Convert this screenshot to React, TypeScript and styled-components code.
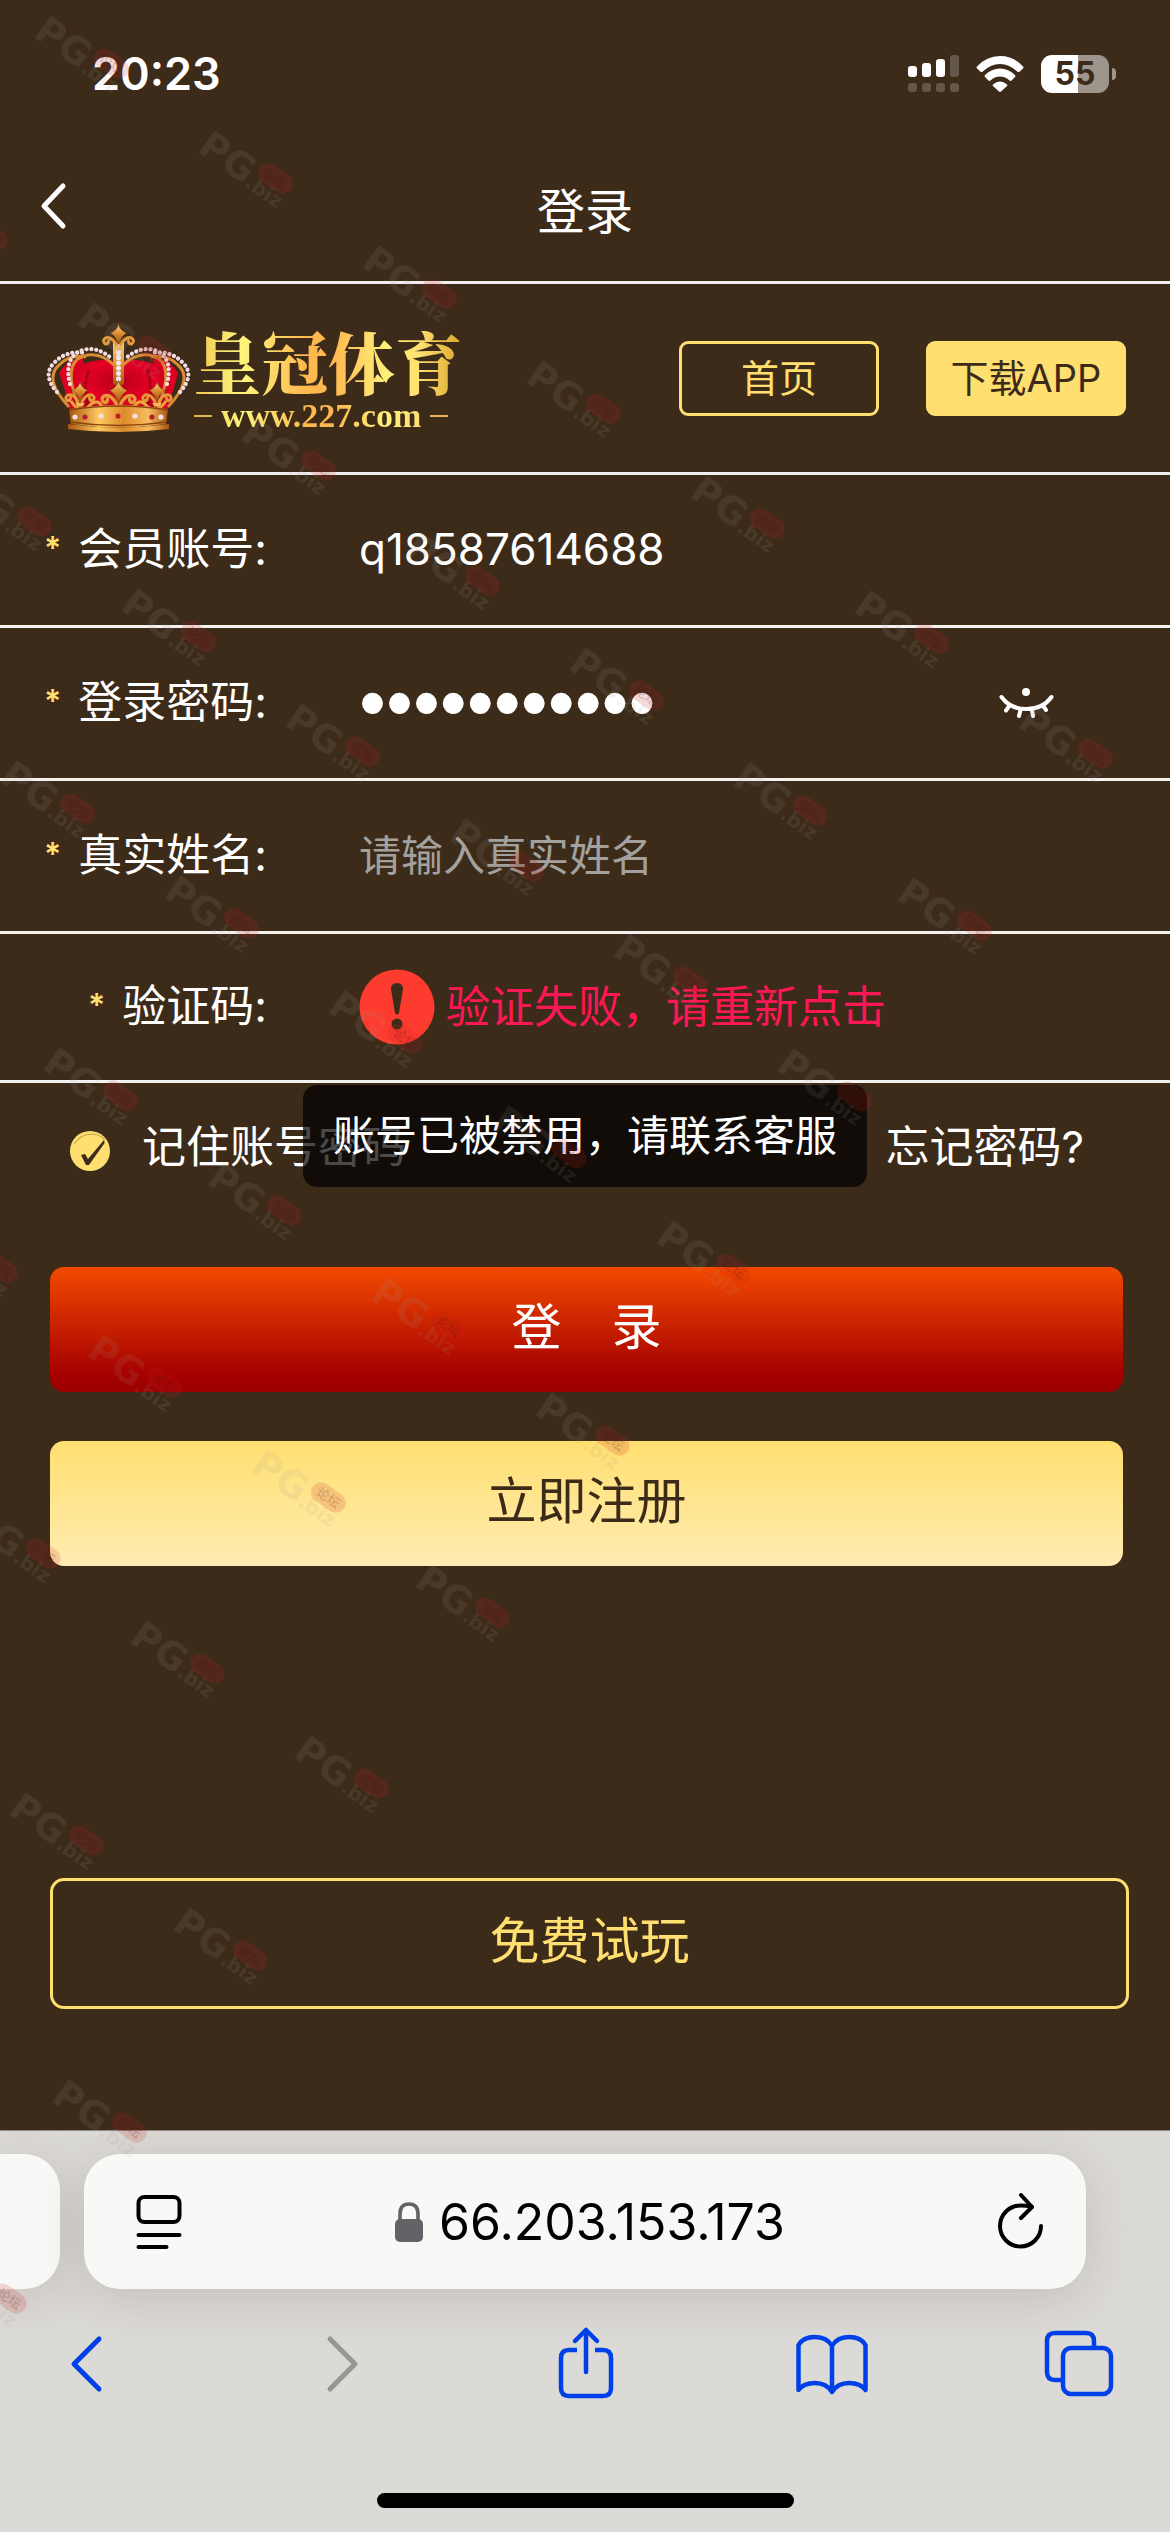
import React, { useState } from 'react';
import styled, { createGlobalStyle, css } from 'styled-components';

const gold = '#ffdf70';
const brown = '#3d2b1a';
const blue = '#0040e8';

const GlobalStyle = createGlobalStyle`
  *, *::before, *::after { box-sizing: border-box; }
  body {
    margin: 0;
    background: ${brown};
    color: #fff;
    font-family: Inter, "Noto Sans CJK SC", sans-serif;
    font-size: 44px;
    line-height: 60px;
  }
  button, input { font: inherit; color: inherit; margin: 0; }
  button { padding: 0; border: 0; background: none; cursor: pointer; }
`;

const Screen = styled.div`
  position: relative;
  display: flex;
  flex-direction: column;
  overflow: hidden;
`;

const StatusBar = styled.div`
  display: flex;
  align-items: center;
  justify-content: space-between;
  height: 142px;
  padding: 6px 54px 0 92px;
`;

const Clock = styled.time`
  font-size: 45px;
  font-weight: 600;
`;

const StatusIcons = styled.div`
  display: flex;
  align-items: center;
  gap: 17px;
`;

const Battery = styled.div`
  display: flex;
  align-items: center;
  gap: 3px;
`;

const BatteryBody = styled.div`
  width: 68px;
  height: 38px;
  border-radius: 11px;
  background: linear-gradient(90deg, #fff 55%, #9e958c 55%);
  color: ${brown};
  font-size: 32px;
  font-weight: 700;
  line-height: 38px;
  text-align: center;
`;

const BatteryTip = styled.div`
  width: 4px;
  height: 12px;
  border-radius: 0 4px 4px 0;
  background: #9e958c;
`;

const TitleBar = styled.header`
  display: grid;
  grid-template-columns: 68px 1fr 68px;
  align-items: center;
  height: 142px;
  border-bottom: 3px solid #f0eeee;
`;

const BackButton = styled.button`
  display: flex;
  justify-content: flex-end;
  padding-bottom: 12px;
`;

const Title = styled.h1`
  margin: 0;
  font-size: 48px;
  font-weight: 400;
  text-align: center;
`;

const BrandBar = styled.section`
  display: flex;
  align-items: center;
  gap: 47px;
  height: 191px;
  padding: 0 44px 0 45px;
  border-bottom: 3px solid #f0eeee;
`;

const Brand = styled.div`
  display: flex;
  align-items: center;
  gap: 2px;
  margin-right: auto;
`;

const goldText = css`
  background: linear-gradient(90deg, #f0c850, #fdf57e 18%, #ffb84e 42%, #ffb84e 52%, #fff07c 72%, #ffe070 84%, #d9a62c);
  background-clip: text;
  -webkit-background-clip: text;
  color: transparent;
`;

const BrandWords = styled.div`
  display: flex;
  flex-direction: column;
`;

const BrandName = styled.strong`
  ${goldText}
  font-family: "Noto Serif CJK SC", "Noto Sans CJK SC", serif;
  font-size: 67px;
  font-weight: 900;
  line-height: 76px;
`;

const BrandSite = styled.span`
  ${goldText}
  display: flex;
  align-items: center;
  gap: 9px;
  font-family: "Liberation Serif", serif;
  font-size: 34px;
  font-weight: 700;
  line-height: 36px;
  &::before, &::after {
    content: '';
    width: 18px;
    height: 2px;
    background: #e6b450;
  }
`;

const SmallButton = styled.button<{ $filled?: boolean }>`
  width: 200px;
  height: 75px;
  border: 3px solid ${gold};
  border-radius: 9px;
  background: ${(p) => (p.$filled ? gold : 'transparent')};
  color: ${(p) => (p.$filled ? brown : gold)};
  font-size: 38px;
  white-space: nowrap;
`;

const Row = styled.div<{ $short?: boolean }>`
  display: flex;
  align-items: center;
  height: ${(p) => (p.$short ? 149 : 153)}px;
  padding-right: 116px;
  border-bottom: 3px solid #f2f2f0;
`;

const Label = styled.label`
  display: flex;
  justify-content: flex-end;
  align-items: center;
  gap: 17px;
  width: 267px;
  margin-right: 92px;
  padding-bottom: 2px;
  white-space: nowrap;
`;

const Star = styled.span`
  color: ${gold};
  font-size: 32px;
  font-weight: 600;
  line-height: 32px;
`;

const TextBox = styled.input<{ $dots?: boolean }>`
  flex: 1;
  min-width: 0;
  height: 90px;
  padding: 0 0 2px;
  border: 0;
  outline: 0;
  background: transparent;
  ${(p) => p.$dots && css`
    font-family: "Liberation Sans", sans-serif;
    font-size: 77px;
  `}
  &::placeholder { color: #a3a19e; font-size: 42px; opacity: 1; }
`;

const CaptchaButton = styled.button`
  display: flex;
  align-items: center;
  gap: 11px;
  color: #ff1654;
  white-space: nowrap;
`;

const Options = styled.div`
  position: relative;
  display: flex;
  align-items: center;
  justify-content: space-between;
  height: 128px;
  padding: 0 86px 0 70px;
`;

const Remember = styled.label`
  display: flex;
  align-items: center;
  gap: 32px;
`;

const Tick = styled.span`
  position: relative;
  display: flex;
  margin-top: 8px;
  svg { pointer-events: none; }
`;

const TickBox = styled.input`
  position: absolute;
  inset: 0;
  width: 40px;
  height: 40px;
  opacity: 0;
`;

const Forgot = styled.a`
  color: inherit;
  text-decoration: none;
`;

const Toast = styled.div`
  position: absolute;
  top: 2px;
  left: 50%;
  transform: translateX(-50%);
  padding: 21px 30px;
  border-radius: 14px;
  background: rgba(0, 0, 0, 0.71);
  font-size: 42px;
  white-space: nowrap;
`;

const Actions = styled.div`
  display: flex;
  flex-direction: column;
  gap: 49px;
  padding: 56px 47px 312px 50px;
`;

const BigButton = styled.button<{ $tone: 'red' | 'gold' }>`
  height: 125px;
  padding-bottom: 6px;
  border-radius: 14px;
  font-size: 50px;
  white-space: pre;
  ${(p) => p.$tone === 'red'
    ? css`
        background: linear-gradient(#f24a00, #a60000 86%, #9a0000);
        color: #fff;
      `
    : css`
        background: linear-gradient(#ffdf70, #ffecb2);
        color: ${brown};
      `}
`;

const TrialButton = styled.button`
  height: 131px;
  margin: 0 41px 121px 50px;
  padding-bottom: 6px;
  border: 3px solid ${gold};
  border-radius: 14px;
  color: ${gold};
  font-size: 50px;
`;

const Browser = styled.footer`
  display: flex;
  flex-direction: column;
  border-top: 1px solid #8e8a86;
  background: #dcdad6;
  color: #000;
`;

const Tabs = styled.div`
  display: flex;
  gap: 24px;
  padding: 23px 84px 0 0;
`;

const tabShape = css`
  height: 135px;
  background: #f8f8f6;
  box-shadow: 0 8px 50px rgba(60, 50, 40, 0.16);
`;

const NextTab = styled.div`
  ${tabShape}
  width: 60px;
  border-radius: 0 36px 36px 0;
`;

const AddressBar = styled.div`
  ${tabShape}
  flex: 1;
  display: flex;
  align-items: center;
  justify-content: space-between;
  padding: 0 42px 0 52px;
  border-radius: 36px;
`;

const Address = styled.span`
  display: flex;
  align-items: center;
  gap: 16px;
  font-size: 50px;
`;

const IconButton = styled.button`
  display: flex;
`;

const Toolbar = styled.nav`
  display: flex;
  justify-content: space-between;
  padding: 37px 54px 0 50px;
`;

const HomeBar = styled.div`
  width: 417px;
  height: 15px;
  margin: 93px auto 24px;
  border-radius: 8px;
  background: #000;
`;

const MarkLayer = styled.svg`
  position: absolute;
  inset: 0;
  width: 100%;
  height: 100%;
  pointer-events: none;
`;

const marks: { x: number; y: number }[] = [];
for (let j = 0; j < 10; j++) {
  for (let i = -3; i + j <= 6; i++) {
    const x = Math.round(34 + i * 164 + j * 43.3);
    const y = Math.round(15 + i * 115 + j * 286.7);
    if (x > -100 && y > 0) marks.push({ x, y });
  }
}

const Marks = () => (
  <MarkLayer aria-hidden="true">
    {marks.map(({ x, y }) => (
      <g key={`${x}-${y}`} transform={`translate(${x + 15} ${y}) rotate(35)`} fill="rgba(160,155,145,0.13)" fontWeight="700">
        <text x="-2" y="27" fontFamily="DejaVu Sans" fontSize="38">PG</text>
        <text x="57" y="28" fontFamily="DejaVu Sans" fontSize="20">.biz</text>
        <rect x="60" y="-6" width="38" height="20" rx="10" fill="rgba(200,30,30,0.17)" />
        <text x="66" y="9" fontFamily="Noto Sans CJK SC" fontSize="13" fill="rgba(50,20,10,0.18)">论坛</text>
      </g>
    ))}
  </MarkLayer>
);

const SignalIcon = () => (
  <svg width="51" height="38" viewBox="0 0 51 38" fill="#fff">
    <rect x="0" y="11" width="9" height="11" rx="3" />
    <rect x="14" y="8" width="9" height="14" rx="3" />
    <rect x="28" y="4" width="9" height="18" rx="3" />
    <g opacity="0.2">
      <rect x="42" y="0" width="9" height="22" rx="3" />
      {[0, 14, 28, 42].map((x) => <rect key={x} x={x} y="28" width="9" height="9" rx="3" />)}
    </g>
  </svg>
);

const WifiIcon = () => (
  <svg width="48" height="36" viewBox="0 0 48 36" fill="#fff">
    <path d="M1 10.500Q10.500 0 24 0t23 10.500q1 1 0 2l-3.500 3.300q-1 .8-2 0Q33.500 8 24 8T6.500 15.800q-1 .8-2 0L1 12.500q-1-1 0-2z" />
    <path d="M9 19q6.500-6.500 15-6.500T39 19q1 1 0 2l-3.500 3.500q-1 .8-2 0Q29.500 20.500 24 20.500t-9.500 4q-1 .8-2 0L9 21q-1-1 0-2z" />
    <path d="M17 28.500q7-6 14 0 .8.800 0 1.600L25 35.500q-1 .8-2 0l-6-5.400q-.8-.8 0-1.600z" />
  </svg>
);

const Fleur = ({ x, y, s = 1 }: { x: number; y: number; s?: number }) => (
  <g transform={`translate(${x} ${y}) scale(${s})`}>
    <path d="M0-15Q1-9 8-6 2-2 1 5h-2Q-2-2-8-6-1-9 0-15z" fill="url(#goldV)" stroke="#7a3a08" strokeWidth=".6" />
    <path d="M-2 6Q-7-3-13-1q-4 3 0 6 3 0 3-3M2 6Q7-3 13-1q4 3 0 6-3 0-3-3" fill="none" stroke="#e59a38" strokeWidth="3" strokeLinecap="round" />
    <path d="M-5 7h10l-2 4h-6z" fill="#f4b95a" />
  </g>
);

const CrownLogo = () => (
  <svg width="147" height="110" viewBox="0 2 147 110" role="img" aria-label="皇冠体育">
    <defs>
      <linearGradient id="goldV" x1="0" y1="0" x2="0" y2="1">
        <stop offset="0" stopColor="#ffd98a" /><stop offset=".5" stopColor="#d98a2e" /><stop offset="1" stopColor="#9c4f10" />
      </linearGradient>
      <linearGradient id="goldH" x1="0" y1="0" x2="1" y2="0">
        <stop offset="0" stopColor="#a8560f" /><stop offset=".3" stopColor="#ffc860" /><stop offset=".55" stopColor="#dc8a2c" /><stop offset=".8" stopColor="#f8bc60" /><stop offset="1" stopColor="#a8560f" />
      </linearGradient>
      <radialGradient id="velvet" cx=".5" cy=".4" r=".7">
        <stop offset="0" stopColor="#b80016" /><stop offset=".55" stopColor="#e60026" /><stop offset="1" stopColor="#a00014" />
      </radialGradient>
    </defs>
    <path d="M14 52q8-14 24-15l8 53-20 2Q20 68 14 52zM133 52q-8-14-24-15l-8 53 20 2q8-24 12-40z" fill="#dc0022" />
    <path d="M32 92Q18 54 38 43q17-7 35-2 18-5 36 2 20 11 6 49z" fill="url(#velvet)" />
    <path d="M44 48q-7 20 0 36M102 48q7 20 0 36" stroke="#6c000c" strokeWidth="3" fill="none" opacity=".45" />
    <path d="M24 86Q-2 58 14 44 25 33 41 36M123 86q26-28 10-42-11-11-27-8M34 86Q16 42 39 35q16-5 31 10M113 86q18-44-5-51-16-5-31 10" fill="none" stroke="#d98c34" strokeWidth="3" />
    <path d="M12 71Q-3 54 9 42 21 29 40 32M135 71q15-17 3-29-12-13-31-10M25 63Q18 36 38 29q14-4 28 8M122 63q7-27-13-34-14-4-28 8" fill="none" stroke="#f4dde2" strokeWidth="4.200" strokeLinecap="round" strokeDasharray=".1 4.800" />
    <path d="M68 22h11v40l-5.500 6-5.500-6z" fill="url(#goldV)" />
    <path d="M73.500 26v34" stroke="#f8e6ee" strokeWidth="5" strokeLinecap="round" strokeDasharray=".1 5.200" />
    <Fleur x={73.5} y={18} />
    <Fleur x={73.5} y={76} s={1.1} />
    <Fleur x={35} y={75} s={0.95} />
    <Fleur x={112} y={75} s={0.95} />
    <path d="M26 80q10 16 20 3 8-6 12 5 8-2 15-3 8 1 15 3 5-11 12-5 10 13 21-3" fill="none" stroke="#f0a53e" strokeWidth="3" />
    <path d="M24 88q49-8 99 0l-2 15q-48 7-95 0z" fill="url(#goldH)" />
    <path d="M24 89q49-8 99 0M25 101q48 7 97 0" fill="none" stroke="#8c430c" strokeWidth="1.400" />
    <path d="M23 103q50 7 101 0v5q-51 6-101 0z" fill="url(#goldH)" />
    {[[30, 96, '#f4dfe4'], [40, 96, '#b3202c'], [56, 95, '#f4dfe4'], [73, 95, '#c01c2a'], [90, 95, '#f4dfe4'], [107, 96, '#b3202c'], [116, 96, '#f4dfe4']].map(([x, y, c]) => (
      <circle key={x} cx={x} cy={y} r="2.600" fill={c as string} />
    ))}
  </svg>
);

const EyeIcon = () => (
  <svg width="55" height="30" viewBox="0 0 55 30" fill="none" stroke="#fff" strokeWidth="4" strokeLinecap="round">
    <path d="M2.500 9Q11 21 27.500 21T52.500 9" />
    <path d="M10.500 17.500l-3.500 5M21.500 22l-1.500 6M33 22l1 6M43.500 17l3.500 5" />
    <circle cx="27" cy="4" r="4" fill="#fff" stroke="none" />
  </svg>
);

const ErrorIcon = () => (
  <svg width="76" height="76" viewBox="0 0 76 76">
    <circle cx="38" cy="38" r="37.500" fill="#fd3b2f" />
    <path d="M32 20q0-6 6-6t6 6l-4 24q-2 3-4 0z" fill={brown} />
    <circle cx="38" cy="55" r="5.500" fill={brown} />
  </svg>
);

const TickIcon = ({ on }: { on: boolean }) => (
  <svg width="40" height="40" viewBox="0 0 40 40">
    <circle cx="20" cy="20" r="20" fill={gold} />
    <path d="M4 13Q12 1 26 3.500q6 1.500 9 6" fill="none" stroke="#c8ab55" strokeWidth="1.200" />
    {on && <path d="M11 24l4-1 3 5L34 9l.6 3L19 34h-3z" fill={brown} />}
  </svg>
);

const Chevron = ({ d, color }: { d: string; color: string }) => (
  <svg width="72" height="74" viewBox="0 0 72 74" fill="none" stroke={color} strokeWidth="5" strokeLinecap="round" strokeLinejoin="round">
    <path d={d} />
  </svg>
);

type FieldProps = { id: string; label: string; short?: boolean; children: React.ReactNode };

const Field = ({ id, label, short, children }: FieldProps) => (
  <Row $short={short}>
    <Label htmlFor={id}><Star>*</Star>{label}</Label>
    {children}
  </Row>
);

export default function App() {
  const [account, setAccount] = useState('q18587614688');
  const [password, setPassword] = useState('abcdefghijk');
  const [name, setName] = useState('');
  const [remember, setRemember] = useState(true);
  const [visible, setVisible] = useState(false);

  return (
    <>
      <GlobalStyle />
      <Screen>
        <StatusBar>
          <Clock>20:23</Clock>
          <StatusIcons>
            <SignalIcon />
            <WifiIcon />
            <Battery>
              <BatteryBody>55</BatteryBody>
              <BatteryTip />
            </Battery>
          </StatusIcons>
        </StatusBar>

        <TitleBar>
          <BackButton aria-label="返回">
            <svg width="28" height="48" viewBox="0 0 28 48" fill="none" stroke="#fff" strokeWidth="5" strokeLinecap="round" strokeLinejoin="round">
              <path d="M23 4L4 24l19 20" />
            </svg>
          </BackButton>
          <Title>登录</Title>
        </TitleBar>

        <BrandBar>
          <Brand>
            <CrownLogo />
            <BrandWords>
              <BrandName>皇冠体育</BrandName>
              <BrandSite>www.227.com</BrandSite>
            </BrandWords>
          </Brand>
          <SmallButton>首页</SmallButton>
          <SmallButton $filled>下载APP</SmallButton>
        </BrandBar>

        <Field id="account" label="会员账号:">
          <TextBox id="account" value={account} onChange={(e) => setAccount(e.target.value)} />
        </Field>
        <Field id="password" label="登录密码:">
          <TextBox id="password" type={visible ? 'text' : 'password'} $dots={!visible} value={password} onChange={(e) => setPassword(e.target.value)} />
          <IconButton aria-label="显示密码" onClick={() => setVisible(!visible)}><EyeIcon /></IconButton>
        </Field>
        <Field id="realname" label="真实姓名:">
          <TextBox id="realname" placeholder="请输入真实姓名" value={name} onChange={(e) => setName(e.target.value)} />
        </Field>
        <Field id="captcha" label="验证码:" short>
          <CaptchaButton id="captcha"><ErrorIcon />验证失败，请重新点击</CaptchaButton>
        </Field>

        <Options>
          <Remember>
            <Tick>
              <TickBox type="checkbox" checked={remember} onChange={(e) => setRemember(e.target.checked)} />
              <TickIcon on={remember} />
            </Tick>
            记住账号密码
          </Remember>
          <Forgot href="#forgot">忘记密码?</Forgot>
          <Toast role="alert">账号已被禁用，请联系客服</Toast>
        </Options>

        <Actions>
          <BigButton $tone="red">{'登　录'}</BigButton>
          <BigButton $tone="gold">立即注册</BigButton>
        </Actions>
        <TrialButton>免费试玩</TrialButton>

        <Browser>
          <Tabs>
            <NextTab />
            <AddressBar>
              <IconButton aria-label="页面菜单">
                <svg width="46" height="56" viewBox="0 0 46 56" fill="none" stroke="#000" strokeWidth="4" strokeLinecap="round">
                  <rect x="2.500" y="3" width="41" height="25" rx="6" />
                  <path d="M2.500 41h41M2.500 53h28" />
                </svg>
              </IconButton>
              <Address>
                <svg width="28" height="40" viewBox="0 0 28 40">
                  <rect x="0" y="17" width="28" height="23" rx="5" fill="#636267" />
                  <path d="M5 18v-6q0-10 9-10t9 10v6" fill="none" stroke="#636267" strokeWidth="3.600" />
                </svg>
                66.203.153.173
              </Address>
              <IconButton aria-label="刷新">
                <svg width="46" height="58" viewBox="0 0 46 58" fill="none" stroke="#000" strokeWidth="4" strokeLinecap="round" strokeLinejoin="round">
                  <path d="M43 33a20.500 20.500 0 1 1-20.500-20.500q6 0 11 1" />
                  <path d="M23 2l11 12-11 11" />
                </svg>
              </IconButton>
            </AddressBar>
          </Tabs>
          <Toolbar>
            <IconButton aria-label="后退"><Chevron color={blue} d="M49 13L24 38l25 25" /></IconButton>
            <IconButton aria-label="前进"><Chevron color="#969593" d="M31 13l25 25-25 25" /></IconButton>
            <IconButton aria-label="分享">
              <svg width="72" height="74" viewBox="0 0 72 74" fill="none" stroke={blue} strokeWidth="4.500" strokeLinecap="round" strokeLinejoin="round">
                <path d="M30 24h-8q-8 0-8 8v30q0 8 8 8h34q8 0 8-8V32q0-8-8-8h-8" strokeLinecap="butt" />
                <path d="M39 46V4M28 15L39 4l11 11" />
              </svg>
            </IconButton>
            <IconButton aria-label="书签">
              <svg width="72" height="74" viewBox="0 0 72 74" fill="none" stroke={blue} strokeWidth="4.500" strokeLinejoin="round" strokeLinecap="round">
                <path d="M36 20q-5-9-17-9T2.500 19v45q5-7 16.500-7t17 9q5.500-9 17-9t16.500 7V19Q65 11 53 11t-17 9v46" />
              </svg>
            </IconButton>
            <IconButton aria-label="标签页">
              <svg width="72" height="74" viewBox="0 0 72 74" fill="none" stroke={blue} strokeWidth="4.500">
                <path d="M19 54h-8q-8 0-8-8V15q0-8 8-8h31q8 0 8 8v7" />
                <rect x="19" y="22" width="48" height="46" rx="8" />
              </svg>
            </IconButton>
          </Toolbar>
          <HomeBar />
        </Browser>
        <Marks />
      </Screen>
    </>
  );
}
